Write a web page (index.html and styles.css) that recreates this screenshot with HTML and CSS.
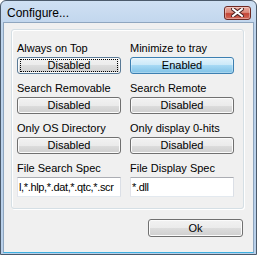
FILE: index.html
```html
<!DOCTYPE html>
<html lang="en">
<head>
  <meta charset="UTF-8" />
  <title>Configure...</title>
  <link rel="stylesheet" href="styles.css">
</head>
<body>

  <div class="window">
    <div class="titlebar">
      <span class="title">Configure...</span>
      <span class="close">
        <svg width="13" height="9" viewBox="0 0 13 9">
          <path d="M2 1 L11 8 M11 1 L2 8" stroke="#4a2020" stroke-width="4" stroke-linecap="square"/>
          <path d="M2 1 L11 8 M11 1 L2 8" stroke="#fff" stroke-width="2" stroke-linecap="square"/>
        </svg>
      </span>
    </div>

    <div class="client">
      <div class="group">
        <div class="field">
          <div class="label">Always on Top</div>
          <div class="btn focused"><span>Disabled</span></div>
        </div>
        <div class="field">
          <div class="label">Minimize to tray</div>
          <div class="btn on"><span>Enabled</span></div>
        </div>
        <div class="field">
          <div class="label">Search Removable</div>
          <div class="btn"><span>Disabled</span></div>
        </div>
        <div class="field">
          <div class="label">Search Remote</div>
          <div class="btn"><span>Disabled</span></div>
        </div>
        <div class="field">
          <div class="label">Only OS Directory</div>
          <div class="btn"><span>Disabled</span></div>
        </div>
        <div class="field">
          <div class="label">Only display 0-hits</div>
          <div class="btn"><span>Disabled</span></div>
        </div>
        <div class="field">
          <div class="label">File Search Spec</div>
          <div class="textbox">l,*.hlp,*.dat,*.qtc,*.scr</div>
        </div>
        <div class="field">
          <div class="label">File Display Spec</div>
          <div class="textbox">*.dll</div>
        </div>
      </div>

      <div class="footer">
        <div class="btn ok"><span>Ok</span></div>
      </div>
    </div>
  </div>

</body>
</html>
```

FILE: styles.css
```css
html, body {
  margin: 0;
  padding: 0;
}

body {
  font-family: 'Liberation Sans', Arial, sans-serif;
  font-size: 11px;
  color: #000;
  background: #fff;
}

.window {
  width: 257px;
  height: 255px;
  box-sizing: border-box;
  border: 1px solid #4b5a6b;
  border-radius: 6px 6px 0 0;
  background: linear-gradient(to bottom, #cfe0f3, #bdd3eb 30px, #b9d0ea);
  padding: 0 2px 1px 2px;
  display: flex;
  flex-direction: column;
}

.titlebar {
  height: 21px;
  display: flex;
  align-items: center;
  justify-content: space-between;
  padding: 0 3px 0 4px;
}

.title {
  font-size: 12px;
  margin-top: 2px;
}

.close {
  width: 25px;
  height: 12px;
  border: 1px solid #6e2a24;
  border-radius: 3px;
  background: linear-gradient(to bottom, #eaa89c 0%, #db8a7c 45%, #c44536 55%, #d2695a 100%);
  box-shadow: inset 0 0 0 1px rgba(255, 255, 255, 0.35);
  display: flex;
  align-items: center;
  justify-content: center;
  margin-top: 2px;
}

.client {
  flex: 1;
  background: #f0f0f0;
  border: 1px solid #8fa6bf;
  border-bottom-color: #3fb0e0;
  padding: 6px 9px 0 7px;
}

.group {
  height: 180px;
  box-sizing: border-box;
  border: 1px solid #d5dfe5;
  border-radius: 3px;
  box-shadow: inset 1px 1px 0 #fff, 1px 1px 0 #fff;
  padding: 11px 7px 0 5px;
  display: grid;
  grid-template-columns: 104px 104px;
  column-gap: 9px;
  row-gap: 7px;
  align-content: start;
}

.label {
  height: 14px;
  line-height: 14px;
  margin-bottom: 2px;
  white-space: nowrap;
}

.btn {
  height: 17px;
  box-sizing: border-box;
  border: 1px solid #707070;
  border-radius: 3px;
  background: linear-gradient(to bottom, #f2f2f2 0%, #ebebeb 50%, #dddddd 50%, #cfcfcf 100%);
  box-shadow: inset 0 0 0 1px #fbfbfb;
  display: flex;
  align-items: center;
  justify-content: center;
  position: relative;
}

.btn span {
  line-height: 13px;
}

.btn.on {
  border-color: #3c7fb1;
  background: linear-gradient(to bottom, #e3f3fc 0%, #c9e8f8 50%, #a6d9f4 50%, #7fc1e6 100%);
  box-shadow: inset 0 0 0 1px rgba(255, 255, 255, 0.3);
}

.btn.focused {
  border-color: #5a7a96;
}

.btn.focused::after {
  content: "";
  position: absolute;
  left: 2px;
  top: 1px;
  right: 2px;
  bottom: 1px;
  border: 1px dotted #000;
}

.textbox {
  height: 20px;
  box-sizing: border-box;
  border: 1px solid #abadb3;
  border-color: #abadb3 #dbdfe6 #e3e9ef #e2e3ea;
  background: #fff;
  padding: 0 1px;
  line-height: 18px;
  letter-spacing: -0.35px;
  white-space: nowrap;
  overflow: hidden;
}

.footer {
  display: flex;
  justify-content: flex-end;
  padding-top: 10px;
  padding-right: 1px;
}

.btn.ok {
  width: 95px;
  height: 18px;
}
```
